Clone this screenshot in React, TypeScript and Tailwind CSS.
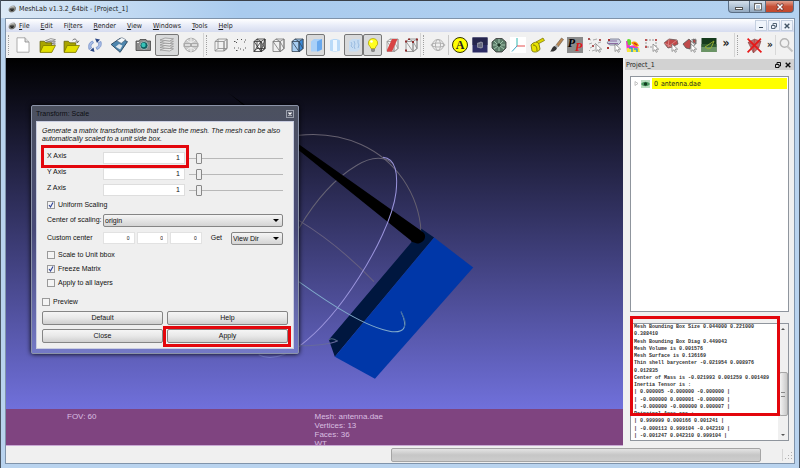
import React, { useState } from "react";

type Kids = { children?: React.ReactNode };

function Svg({ children, size = 16 }: Kids & { size?: number }) {
  return (
    <svg viewBox="0 0 16 16" width={size} height={size} fill="none" strokeLinejoin="round" aria-hidden="true">
      {children}
    </svg>
  );
}

function Tool({ label, pressed, wide, children }: Kids & { label: string; pressed?: boolean; wide?: boolean }) {
  return (
    <button
      type="button"
      aria-label={label}
      className={
        "flex shrink-0 items-center justify-center " +
        (wide ? "w-6 " : "w-[19px] ") +
        (pressed ? "h-[22px] rounded-xs border border-[#777] bg-[#d9dadb]" : "h-6")
      }
    >
      {children}
    </button>
  );
}

function Grip() {
  return (
    <div className="flex h-6 w-2 shrink-0 items-center justify-between border-l border-[#d4d4d4] pr-1 pl-[2px]">
      <span className="h-5 border-l border-dotted border-[#a0a0a0]" />
    </div>
  );
}

const Cube = ({ stroke = "#888", front = "none", side = "none", cross = true }) => (
  <g stroke={stroke} strokeWidth="0.8">
    <path d="M2 4.500 5 2h9v9.500L11 14H2z" fill={front} />
    <path d="M11 4.500 14 2v9.500L11 14z" fill={side} />
    <path d="M2 4.500h9V14M5 2v9.500M2 14l3-2.500h9" />
    {cross && <path d="M2 14 6 4.500 11 14 14 2" />}
  </g>
);

const TallCube = ({ stroke = "#777", front = "none", side = "none" }) => (
  <g stroke={stroke} strokeWidth="0.8">
    <path d="M3 4.500 6 2h8v9.500L11 14.500H3z" fill={front} />
    <path d="M10 4.500 14 2v9.500l-4 3z" fill={side} />
    <path d="M3 4.500h7v10M3 4.500l7 10M10 4.500l4 7M6 2l4 2.500" />
  </g>
);

const Cursor = () => <path d="M9 7v7.500l2-1.800 1.200 2.600 1.200-.6-1.100-2.500h2.400z" fill="#fff" stroke="#777" strokeWidth=".7" />;

const Folder = ({ layers = false }) => (
  <>
    {layers && <path d="m6 3.500 5-2 4.500 1-4 2zM6 5.500l5-2 4.500 1-4 2zM6 7.500l5-2 4.500 1-4 2z" fill="#eee" stroke="#666" strokeWidth=".6" />}
    <path d="M1 14V4h4l1.500 1.500H12V14z" fill="#a8a400" stroke="#5f5c00" strokeWidth=".7" />
    <path d="m1 14.500 3-6.500h11.500L12 14.500z" fill="#e2df00" stroke="#777300" strokeWidth=".7" />
    {!layers && <path d="M9 3c2-2 4-1 4.500 2M15 3.500 13.500 5.500 12 4" stroke="#555" strokeWidth=".8" />}
  </>
);

const Globe = () => (
  <g stroke="#aaa" strokeWidth="0.9">
    <circle cx="8" cy="8" r="5.500" />
    <ellipse cx="8" cy="8" rx="2.500" ry="5.500" />
    <ellipse cx="8" cy="8" rx="7" ry="2" />
  </g>
);

const Eye = () => (
  <>
    <path d="M2 10C2 5 6 2 11 2c3 0 4 2 4 5 0 5-4 7-8 7-3 0-5-1-5-4z" fill="#8a8a80" stroke="#444" />
    <circle cx="8" cy="9" r="3.500" fill="#222" />
    <path d="M3 6c3-3 7-3 10-2M7 7.500h2" stroke="#f4f4f4" strokeWidth="1.500" />
  </>
);

function MainToolbar() {
  return (
    <div role="toolbar" aria-label="Main" className="flex h-[26px] shrink-0 items-center bg-[#f1f1f1]">
      <div className="flex h-6 w-[5px] shrink-0 items-center pl-[2px]">
        <span className="h-5 border-l border-dotted border-[#a0a0a0]" />
      </div>
      <Tool wide label="New project">
        <Svg>
          <path d="M2 .8h8L14 5v10.200H2z" fill="#fff" stroke="#999" strokeWidth=".8" />
          <path d="M10 .8V5h4" fill="#ddd" stroke="#888" strokeWidth=".8" />
        </Svg>
      </Tool>
      <Tool wide label="Open project"><Svg size={17}><Folder layers /></Svg></Tool>
      <Tool wide label="Import mesh"><Svg size={17}><Folder /></Svg></Tool>
      <Tool wide label="Reload">
        <Svg>
          <path d="M2 12.500C1 8 2 5.500 5.500 4l1 2C4 7 3.500 9 4.500 11z" fill="#a9bde6" stroke="#5f7fbf" strokeWidth=".6" />
          <path d="M14 4.500c1 4-.5 6.500-4 8l-1-2c2.500-1 3-2.500 2.500-5z" fill="#a9bde6" stroke="#5f7fbf" strokeWidth=".6" />
          <path d="m8 1.500 5 1-3 3.500zM7.500 15 3 13.500l3.500-3z" fill="#2a4684" />
        </Svg>
      </Tool>
      <Tool wide label="Export mesh">
        <Svg size={18}>
          <path d="M1 7.500 9 2l6.500 3L9 14.500z" fill="#4e86ae" stroke="#25435c" strokeWidth=".8" />
          <path d="m6 4.200 4.500-2.800 3.500 1.800L10 6.500z" fill="#f3f7fa" stroke="#567" strokeWidth=".5" />
          <path d="m5 9.500 3-2.500 3 1.500L9 12z" fill="#dfe8ee" />
        </Svg>
      </Tool>
      <Tool wide label="Snapshot">
        <Svg>
          <path d="M1 4h3l1-1.500h6L12 4h3.500v9.500H1z" fill="#8b8b8b" stroke="#444" strokeWidth=".8" />
          <circle cx="9" cy="8.500" r="4" fill="#0f5f60" stroke="#ccc" strokeWidth=".7" />
          <circle cx="8.500" cy="8" r="2.200" fill="#36c3b8" />
          <path d="M2 5.500h2" stroke="#eee" />
        </Svg>
      </Tool>
      <Tool wide pressed label="Show layers">
        <Svg>
          {[11.5, 9, 6.5, 4, 1.5].map((y) => (
            <path key={y} d={`M1 ${y + 1.5} 6 ${y - 0.5}l8.500 .8-4 2.200z`} fill="#e6e6e6" stroke="#8c8c8c" strokeWidth=".7" />
          ))}
        </Svg>
      </Tool>
      <Tool wide label="Raster mode">
        <Svg>
          <circle cx="8" cy="8" r="6.800" fill="#ccc" stroke="#aaa" />
          <path d="M8 1v14M1.500 8h13M4 3c3 3 5 3 8 0M4 13c3-3 5-3 8 0" stroke="#f2f2f2" />
          <path d="M.5 6h15v4H.5z" fill="#aaa" />
          <path d="M2 8h5M9 8h5" stroke="#eee" strokeWidth="1.500" />
        </Svg>
      </Tool>
      <Grip />
      <Tool label="Bounding box"><Svg><Cube cross={false} /></Svg></Tool>
      <Tool label="Points">
        <Svg><path d="M2 4.500h1.500M5 2.500h1M9 2.500h1M13 3h1M4 5.500h1M12 5h1M2 11h1M4 13.500h1.500M8 12h1M11 13h1M13 11h1M6 11h.8" stroke="#555" strokeWidth="1.200" /></Svg>
      </Tool>
      <Tool label="Wireframe"><Svg><TallCube stroke="#333" /><path d="M3 14.500 10 4.500M6 2v9.500L3 14.500M6 11.500h8M10 14.500 14 2" stroke="#333" strokeWidth=".8" /></Svg></Tool>
      <Tool label="Hidden lines"><Svg><TallCube /></Svg></Tool>
      <Tool label="Flat lines"><Svg><TallCube stroke="#345" front="#a7cdf2" side="#3b8ad8" /></Svg></Tool>
      <Tool pressed label="Flat">
        <Svg><path d="M3 4.500 6 2h8v10l-3 2.500H3z" fill="#a9d0f8" /><path d="m9 4.500 5-2.500v10.500l-5 2z" fill="#69a9ee" /></Svg>
      </Tool>
      <Tool label="Smooth">
        <Svg><path d="M3 3.500c2-2 8-2 10 0v10c-2 1.500-8 1.500-10 0z" fill="#b9daf8" /><path d="M6 3h4v11H6z" fill="#eef7ff" /></Svg>
      </Tool>
      <Tool pressed label="Texture">
        <Svg>
          <path d="M3 4.500 6 2h8v10l-3 2.500H3z" fill="#c6dcf2" />
          <path d="m5 5 1 2-1 2 2 2M8 4l1 3-1 2 1 3M12 3v3l1 2-1 3" stroke="#8fb4dc" strokeWidth=".8" />
        </Svg>
      </Tool>
      <Tool pressed label="Light">
        <Svg>
          <path d="M8 1.500a4.500 4.500 0 0 1 3 8L10 11.500H6L5 9.500a4.500 4.500 0 0 1 3-8z" fill="#ffff20" stroke="#a79a00" strokeWidth=".7" />
          <path d="M6 12h4v2l-1 1H7l-1-1z" fill="#8a8a8a" />
          <circle cx="6.500" cy="4.500" r="1.300" fill="#fff" />
        </Svg>
      </Tool>
      <Tool label="Backface culling"><Svg><TallCube stroke="#999" /><path d="m3 13 5-11h5.500L8 14.500H3z" fill="#d84545" /></Svg></Tool>
      <Tool label="Selected vertices">
        <Svg><TallCube stroke="#888" /><path d="M2 3.500h2v2H2zM13 1.500h2v2h-2zM2 12.500h2v2H2zM5 1.500h2V3H5zM9 4h2v2H9z" fill="#8e2f2f" /></Svg>
      </Tool>
      <Grip />
      <Tool label="Trackball"><Svg><Globe /></Svg></Tool>
      <span className="mx-px h-5 w-px shrink-0 bg-[#c8c8c8]" />
      <button type="button" aria-label="Ambient occlusion" className="flex h-6 w-5 shrink-0 items-center justify-center">
        <span className="flex h-4 w-4 items-center justify-center rounded-full border border-[#333300] bg-[#ffff00] font-['Liberation_Serif',serif] text-xs leading-3 font-bold text-[#222]">A</span>
      </button>
      <Tool label="Depth complexity">
        <Svg><path d="M.5.500h15v15H.5z" fill="#2d2d66" /><path d="M.5.500h15V8H.5z" fill="#25254d" /><path d="m5 6 4-1.500 2 1v5l-2 1-4-1z" fill="#8a8c9e" /><path d="M7 7v3M9 6v4" stroke="#454860" /></Svg>
      </Tool>
      <Tool label="Topology">
        <Svg>
          <path d="M5 1.500h6L15 5v6l-4 4H5L1 11V5z" fill="#5a7a68" stroke="#333" strokeWidth=".8" />
          <path d="m3 4 3 3M12 4 9 7M3 12l4-3M13 12l-4-3M8 2v4M8 10v4M2 8h4M10 8h4" stroke="#a2c5ad" />
          <circle cx="8" cy="8" r="1.500" fill="#1c3324" />
        </Svg>
      </Tool>
      <Tool label="Show axis">
        <Svg>
          <path d="M0 0h16v16H0z" fill="#fff" />
          <path d="M7 9V1" stroke="#30b8b0" />
          <path d="M7 9h8" stroke="#e65050" />
          <path d="m7 9-5 5.500" stroke="#3aa4c4" />
        </Svg>
      </Tool>
      <Tool label="Measure">
        <Svg>
          <path d="m7 5 7-4 1.500 2.500L9 7z" fill="#dcd500" stroke="#777000" strokeWidth=".7" />
          <path d="M2 8c2-3 7-4 8-1l1 5c-1 3-6 4-8 2z" fill="#e8e200" stroke="#6d6900" strokeWidth=".8" />
          <path d="M4 8c3 0 4 2 4 6" stroke="#777000" />
        </Svg>
      </Tool>
      <Tool label="Paint">
        <Svg>
          <path d="m8 8 5.500-7 2 1.500L10 10z" fill="#b98854" stroke="#654" strokeWidth=".6" />
          <path d="m6.500 9 2-1.500L10.500 9.500 9 11z" fill="#aaa" />
          <path d="M2 14.500c2-1 1.500-4.500 4.500-5.500L9 11c-1 3-4 4-7 3.500z" fill="#333" />
        </Svg>
      </Tool>
      <button type="button" aria-label="Pick points" className="flex h-6 w-5 shrink-0 items-center justify-center">
        <span className="flex h-4 w-4 justify-center bg-[#8b8b8b] font-['Liberation_Serif',serif] text-xs leading-3 font-bold italic">
          <span className="text-black">P</span>
          <span className="pt-1 text-[#e01818]">P</span>
        </span>
      </button>
      <Tool label="Select vertices">
        <Svg><path d="m1 2 3 1M6 3l4-1M12 4l2-2M2 7l3-1M7 8l2-2M3 11l2-1M5 14l3-1M11 6l3-1M2 13l1 1" stroke="#999" strokeWidth=".8" /><path d="M1 1h2v2H1zM5 8h2v2H5zM12 2h2v2h-2z" fill="#a55" /><Cursor /></Svg>
      </Tool>
      <Tool label="Select connected">
        <Svg><path d="m1 6 3-4h9l2 3-3 3H4z" fill="#cfd4e4" stroke="#6e7288" strokeWidth=".8" /><path d="M3 4h8M2 6.500h10" stroke="#8a6aa0" /><path d="M2 2h2v2H2zM1 10h2v2H1z" fill="#a33" /><Cursor /></Svg>
      </Tool>
      <Tool label="Select by colour">
        <Svg>
          <path d="M1 4h3l1 5 5-1 4 3v4H2z" fill="#ef38c8" />
          <path d="M2 3c1-2 4-1 4 1v4H3z" fill="#62d830" />
          <path d="M6 6c3-3 7-1 8 3l-3 1z" fill="#f4a000" />
          <path d="M2 11h12l1 4H2z" fill="#f5e73c" />
          <path d="M4 11h3v4M9 12h3v3" stroke="#2c9ad6" strokeWidth="1.500" />
          <path d="m9 6 3 2" stroke="#d62020" strokeWidth="1.500" />
        </Svg>
      </Tool>
      <Tool label="Select area">
        <Svg><path d="M2 3h10v7H2z" stroke="#999" strokeDasharray="2 1" /><path d="M1 2h2v2H1zM11 2h2v2h-2zM1 9h2v2H1z" fill="#b55" /><Cursor /></Svg>
      </Tool>
      <Tool label="Select faces"><Svg><path d="m1 6 5-4 8 1 1 4-6 3-4 1z" fill="#c04a4a" stroke="#655" strokeWidth=".8" /><path d="m6 2-1 8M14 3 5 10M1 6l8 4" stroke="#e29a9a" strokeWidth=".7" /><Cursor /></Svg></Tool>
      <Tool label="Select connected faces"><Svg><path d="m1 7 6-5 2 2-1 8-4-1zM11 2l3 1v4l-3-2z" fill="#c04a4a" stroke="#555" strokeWidth=".8" /><path d="m9 3 5-1-1 6-5 3M7 2l6 6" stroke="#777" strokeWidth=".7" /><Cursor /></Svg></Tool>
      <Tool label="Georeference">
        <Svg>
          <path d="M.5 1h15v14H.5z" fill="#163b1c" />
          <path d="M.5 10h15v5H.5z" fill="#6a9465" />
          <path d="M.5 7h15v3H.5z" fill="#315d32" />
          <path d="m4 10 9-6-3 7-3 1z" stroke="#94ac32" />
        </Svg>
      </Tool>
      <span className="flex-1" />
      <button type="button" aria-label="More tools" className="h-6 w-4 shrink-0 pb-1 text-xs leading-5 font-bold text-[#222]">»</button>
      <Grip />
      <Tool wide label="Delete selected">
        <Svg size={17}>
          <path d="m2 5 6-3 6 2-2 6-5 5z" fill="#c76a6a" stroke="#7a4444" strokeWidth=".6" />
          <path d="m2 5 10 5M8 2 7 15M14 4 5 9" stroke="#944" strokeWidth=".6" />
          <path d="m1.500 1.500 13 13M14 1.500 1.500 14.500" stroke="#e81818" strokeWidth="1.600" />
        </Svg>
      </Tool>
      <button type="button" aria-label="More delete tools" className="h-6 w-2 shrink-0 text-[10px] leading-5 font-bold text-[#222]">»</button>
      <span className="ml-px h-5 w-px shrink-0 bg-[#d8d8d8]" />
      <Tool label="Search"><Svg><circle cx="6.500" cy="6" r="4.200" stroke="#b4b4b4" strokeWidth="1.400" /><path d="m9.500 9.500 5 5" stroke="#c4c4c4" strokeWidth="2" /></Svg></Tool>
    </div>
  );
}

const winBtn = "flex h-3 items-center justify-center border border-t-0 border-[#5b6f86]";

function TitleBar() {
  return (
    <header className="flex h-[18px] shrink-0 items-start border-t border-[#3a4048] bg-linear-to-r from-[#dce9f6] via-[#a9cbee] via-30% to-[#b4d2f0] pr-[5px] pl-[7px]">
      <div className="flex h-4 flex-1 items-center gap-[3px]">
        <Svg size={8}><Eye /></Svg>
        <h1 className="text-[7px] leading-3 text-[#1c1c1c]">MeshLab v1.3.2_64bit - [Project_1]</h1>
      </div>
      <button type="button" aria-label="Minimize" className={winBtn + " w-[22px] rounded-bl bg-linear-to-b from-[#d4e0ec] to-[#93a9c0]"}>
        <span className="mt-1 h-[3px] w-2 border border-[#555] bg-white" />
      </button>
      <button type="button" aria-label="Maximize" className={winBtn + " w-4 border-l-0 bg-linear-to-b from-[#d4e0ec] to-[#93a9c0]"}>
        <svg viewBox="0 0 8 8" width="8" height="8" fill="none"><path d="M1 1h6v5.500H1z" stroke="#666" strokeWidth="2" /><path d="M1.500 1.500h5v4.500h-5z" stroke="#fff" /></svg>
      </button>
      <button type="button" aria-label="Close" className={winBtn + " w-7 rounded-br border-l-0 bg-linear-to-b from-[#e0a18f] via-[#c65037] to-[#c2492e]"}>
        <svg viewBox="0 0 8 8" width="8" height="8"><path d="m1 1 6 6M7 1 1 7" stroke="#633" strokeWidth="2.600" /><path d="m1.500 1.500 5 5M6.500 1.500l-5 5" stroke="#fff" strokeWidth="1.500" /></svg>
      </button>
    </header>
  );
}

function MenuBar() {
  const mdi = "flex h-[11px] w-3 items-center justify-center border border-[#c5d0e0] bg-[#eff4fb]";
  return (
    <nav className="flex h-[14px] shrink-0 items-center border-t border-[#7f93aa] bg-linear-to-b from-white via-[#e8ecf8] to-[#d6dcef] pr-px pl-[2px]">
      <Svg size={8}><Eye /></Svg>
      <div className="ml-[3px] flex flex-1 gap-[11px]">
        {["File", "Edit", "Filters", "Render", "View", "Windows", "Tools", "Help"].map((m) => {
          const at = m === "Filters" ? 2 : 0;
          return (
            <button key={m} type="button" className="text-[7px] leading-3 text-[#1c1c1c]">
              {m.slice(0, at)}<span className="underline">{m[at]}</span>{m.slice(at + 1)}
            </button>
          );
        })}
      </div>
      <div className="flex gap-px">
        <button type="button" aria-label="Minimize project" className={mdi}><span className="mt-1 h-px w-1 bg-[#345]" /></button>
        <button type="button" aria-label="Restore project" className={mdi}><Restore color="#567" /></button>
        <button type="button" aria-label="Close project" className={mdi}><Cross color="#456" /></button>
      </div>
    </nav>
  );
}

const Restore = ({ color }: { color: string }) => (
  <svg viewBox="0 0 6 6" width="6" height="6" fill="none" stroke={color}><path d="M2 2V.5h3.500V4H4M.5 2.500H4v3H.5z" /></svg>
);
const Cross = ({ color }: { color: string }) => (
  <svg viewBox="0 0 6 6" width="6" height="6" stroke={color} strokeWidth="1.400"><path d="m.7.700 4.600 4.600M5.300.700.7 5.300" /></svg>
);

function Scene() {
  return (
    <svg viewBox="6 58 618 387" preserveAspectRatio="xMinYMin slice" className="absolute inset-0 h-full w-full" fill="none" role="img" aria-label="antenna.dae mesh">
      <path d="M298 135C345 130 382 150 402 179c13 19 17 36 18 52" stroke="#65606f" />
      <path d="M298 228c16-27 36-50 58-63 14-9 30-10 37 0" stroke="#666374" />
      <path d="M298 220c28 17 50 35 75 61" stroke="#666080" />
      <path d="m228 93 70 51 126 89 0 5-6 5-7-2L298 150z" fill="#000" />
      <path d="m420 228 13 9-99 119-6-17 83-98 10-1z" fill="#00173f" />
      <path d="m433 237 39 30-98 111-40-22z" fill="#0037a8" />
      <path d="M413 235c4-7 11-4 11 1 0 4-4 7-8 7l-6-2z" fill="#000" />
      <path d="M382 157c13 1 15 17 13 35-3 25-21 60-37 85-19 30-37 52-60 69" stroke="#9a94dc" />
      <path d="M298 346c-14 9-29 14-40 8" stroke="#7d83d8" />
      <path d="M298 281c31 22 67 46 93 50 13 1 16-5 9-20" stroke="#80aacb" />
      <path d="M403 326c3-3 0-9-3-15" stroke="#426b9c" />
      <path d="M298 345c15 0 30-1 39-5" stroke="#666a9d" />
      <path d="M328 339c3-2 5-1 8 1" stroke="#506a80" />
    </svg>
  );
}

const inputCls = "h-3 min-w-0 border border-[#dedede] bg-white pr-1 text-right text-[7px] leading-3 outline-none";
const btnCls = "h-[14px] rounded-xs border border-[#858585] bg-linear-to-b from-[#f5f5f5] via-[#e8e8e8] to-[#cfcfcf] text-[7px] leading-3";
const red = "pointer-events-none absolute border-3 border-[#e3060c]";

function AxisRow({ axis }: { axis: string }) {
  const id = "axis-" + axis;
  return (
    <div className="flex h-4 items-center">
      <label htmlFor={id} className="w-14 pb-1">{axis} Axis</label>
      <input id={id} defaultValue="1" className={inputCls + " w-[82px]"} />
      <input
        type="range"
        aria-label={axis + " Axis slider"}
        defaultValue="8"
        className="ml-1 h-3 min-w-0 flex-1 appearance-none bg-transparent [&::-webkit-slider-runnable-track]:h-px [&::-webkit-slider-runnable-track]:bg-[#b8b8b8] [&::-webkit-slider-thumb]:-mt-[5px] [&::-webkit-slider-thumb]:h-[11px] [&::-webkit-slider-thumb]:w-[6px] [&::-webkit-slider-thumb]:appearance-none [&::-webkit-slider-thumb]:rounded-[1px] [&::-webkit-slider-thumb]:border [&::-webkit-slider-thumb]:border-[#888] [&::-webkit-slider-thumb]:bg-[#eeeeee]"
      />
    </div>
  );
}

function Check({ label, on }: { label: string; on?: boolean }) {
  const [v, setV] = useState(!!on);
  return (
    <label className="flex h-[14px] items-center gap-[3px]">
      <span className="relative flex h-2 w-2">
        <input type="checkbox" checked={v} onChange={() => setV(!v)} className="h-2 w-2 appearance-none border border-[#9a9a9a] bg-[#f4f4f4]" />
        {v && <svg viewBox="0 0 8 8" width="8" height="8" className="pointer-events-none absolute inset-0" fill="none"><path d="m2 4 1.500 2L6 1.500" stroke="#34489a" strokeWidth="1.200" /></svg>}
      </span>
      {label}
    </label>
  );
}

function Drop({ id, label, value, className }: { id: string; label?: string; value: string; className: string }) {
  return (
    <span className={"relative flex " + className}>
      <select id={id} aria-label={label} className="h-[13px] w-full appearance-none rounded-xs border border-[#858585] bg-linear-to-b from-[#f5f5f5] to-[#d4d4d4] pl-px text-[7px] leading-3 outline-none">
        <option>{value}</option>
      </select>
      <span className="pointer-events-none absolute top-[5px] right-1 border-x-3 border-t-3 border-x-transparent border-t-black" />
    </span>
  );
}

function ScaleDialog() {
  return (
    <section role="dialog" aria-label="Transform: Scale" className="absolute top-[47px] left-[25px] w-[268px] rounded-xs border border-[#8b93a8] bg-linear-to-b from-[#4c515f] via-[#484a78] to-[#7479c6] px-1 pb-1 font-['Liberation_Sans',Arial,sans-serif] text-[7px] leading-2 text-[#111] shadow-[0_0_5px_#000]">
      <header className="flex h-[15px] items-center justify-between">
        <h2 className="text-[#0c0e12]">Transform: Scale</h2>
        <button type="button" aria-label="Close dialog" className="flex h-2 w-2 items-center justify-center border border-[#9ba0ad] bg-[#4e5363]"><svg viewBox="0 0 4 4" width="4" height="4"><path d="m.5.500 3 3M3.500.500l-3 3" stroke="#fff" strokeWidth="1.300" /></svg></button>
      </header>
      <div className="border border-[#c9cde0] bg-[#efefef] px-[5px] pt-[5px] pb-[5px]">
        <p className="whitespace-nowrap italic">Generate a matrix transformation that scale the mesh. The mesh can be also<br />automatically scaled to a unit side box.</p>
        <div className="relative mt-[7px] px-[5px]">
          <AxisRow axis="X" />
          <AxisRow axis="Y" />
          <AxisRow axis="Z" />
          <span className={red + " -top-[5px] -left-px h-[23px] w-[148px]"} />
          <Check label="Uniform Scaling" on />
          <div className="flex h-4 items-center">
            <label htmlFor="center" className="w-14 shrink-0 whitespace-nowrap">Center of scaling:</label>
            <Drop id="center" value="origin" className="flex-1" />
          </div>
          <div className="flex h-5 items-center">
            <span className="w-14 shrink-0 whitespace-nowrap">Custom center</span>
            <div className="flex min-w-0 flex-1 gap-[2px]">
              {["x", "y", "z"].map((a) => (
                <input key={a} aria-label={"Custom center " + a} defaultValue="0" className="h-3 w-0 min-w-0 flex-1 border border-[#e2e2e2] bg-white pr-1 text-right text-[5px] leading-3 outline-none" />
              ))}
            </div>
            <label htmlFor="get" className="mx-[9px]">Get</label>
            <Drop id="get" value="View Dir" className="w-[52px] shrink-0" />
          </div>
          <Check label="Scale to Unit bbox" />
          <Check label="Freeze Matrix" on />
          <Check label="Apply to all layers" />
        </div>
        <div className="mt-[5px]"><Check label="Preview" /></div>
        <div className="relative mt-[2px] grid grid-cols-2 gap-x-1 gap-y-1">
          <button type="button" className={btnCls}>Default</button>
          <button type="button" className={btnCls}>Help</button>
          <button type="button" className={btnCls}>Close</button>
          <button type="button" className={btnCls}>Apply</button>
          <span className={red + " -right-[3px] -bottom-1 h-[21px] w-[128px]"} />
        </div>
      </div>
    </section>
  );
}

function Viewport() {
  return (
    <main className="relative flex min-w-0 flex-1 flex-col overflow-hidden bg-linear-to-b/srgb from-black to-[#7c7cf2]">
      <Scene />
      <ScaleDialog />
      <div className="relative mt-auto flex h-[37px] overflow-hidden border-b border-[#c9a9d4] bg-[#7f4480] pt-[3px] font-['Liberation_Sans',Arial,sans-serif] text-[8px] leading-[9px] text-[#d9bfe0]">
        <p className="w-1/2 pl-[61px]">FOV: 60</p>
        <div className="whitespace-nowrap"><p>Mesh: antenna.dae</p><p>Vertices: 13</p><p>Faces: 36</p><p>WT</p></div>
      </div>
    </main>
  );
}

const log = [
  "Mesh Bounding Box Size 0.044000 0.221000", "0.388410", "Mesh Bounding Box Diag 0.449043", "Mesh Volume is 0.001576",
  "Mesh Surface is 0.136169", "Thin shell barycenter -0.021954 0.008976", "0.012835", "Center of Mass is -0.021993 0.001259 0.001489",
  "Inertia Tensor is :", "| 0.000005 -0.000000 -0.000000 |", "| -0.000000 0.000001 -0.000000 |", "| -0.000000 -0.000000 0.000007 |",
  "Principal Axes are :", "| 0.999999 0.000166 0.001241 |", "| -0.000113 0.999104 -0.042310 |", "| -0.001247 0.042310 0.999104 |",
];

function SidePanel() {
  return (
    <aside className="flex w-[171px] shrink-0 flex-col pl-[2px]">
      <header className="mt-px flex h-[11px] shrink-0 items-center gap-1 bg-[#d2d2d2] pr-[3px] pl-px text-[7px] leading-2">
        <h2 className="flex-1">Project_1</h2>
        <button type="button" aria-label="Float panel"><Restore color="#111" /></button>
        <button type="button" aria-label="Close panel"><Cross color="#111" /></button>
      </header>
      <ul className="mx-[5px] mt-[6px] flex-1 border border-[#8f959d] bg-white p-px">
        <li className="flex h-[11px] items-center text-[7px] leading-2">
          <svg viewBox="0 0 5 5" width="5" height="5" className="mx-[2px]" fill="none"><path d="m1 .5 3 2-3 2z" stroke="#aaa" strokeWidth=".7" /></svg>
          <svg viewBox="0 0 9 8" width="9" height="8" className="mr-[2px]"><path d="M0 0h9v8H0z" fill="#b8ddc0" /><path d="M0 4c2-3 7-3 9 0-2 3-7 3-9 0z" fill="#4c9a63" /><circle cx="4.500" cy="4" r="1.700" fill="#123d20" /></svg>
          <span className="flex h-[11px] flex-1 items-center gap-[3px] bg-[#ffff00] pl-[2px]"><span>0</span><span>antenna.dae</span></span>
        </li>
      </ul>
      <div className="relative mx-[5px] mt-[11px] mb-[5px] flex h-[118px] shrink-0 border border-[#8f959d] bg-white">
        <div className="flex min-w-0 flex-1 flex-col justify-between overflow-hidden pl-[3px] font-['Liberation_Mono',monospace] text-[5px] leading-[7px] font-bold whitespace-pre text-[#333]">
          {log.map((l) => <p key={l}>{l}</p>)}
        </div>
        <div className="flex w-[10px] flex-col items-center justify-between bg-[#f0f0f0] py-1">
          <span className="border-x-2 border-b-2 border-x-transparent border-b-[#555]" />
          <span className="mt-6 flex h-11 w-[9px] items-center justify-center rounded-xs border border-[#a6a6a6] bg-linear-to-r from-[#f3f3f3] to-[#c9c9c9]"><span className="h-[5px] w-1 border-y border-[#888]" /></span>
          <span className="border-x-2 border-t-2 border-x-transparent border-t-[#555]" />
        </div>
        <span className={red + " -top-2 -left-px h-[100px] w-[150px]"} />
      </div>
    </aside>
  );
}

export default function App() {
  return (
    <div className="flex h-screen w-full flex-col overflow-hidden border-r border-l border-[#4a5563] bg-[#b9d3ee] font-['DejaVu_Sans_Condensed','DejaVu_Sans',sans-serif] text-[#1c1c1c]">
      <TitleBar />
      <div className="mx-1 mb-1 flex min-h-0 flex-1 flex-col border-r border-b border-l border-[#7f93aa] bg-[#f0f0f0]">
        <MenuBar />
        <MainToolbar />
        <div className="flex min-h-0 flex-1">
          <Viewport />
          <SidePanel />
        </div>
        <footer className="flex h-[17px] shrink-0 items-center justify-end pr-px">
          <div role="progressbar" aria-label="Progress" className="h-[14px] w-[47%] rounded-xs border border-[#a5a5a5] bg-linear-to-b from-[#e4e4e4] via-[#c6c6c6] to-[#cdcdcd]" />
          <span className="ml-[21px] h-3 w-px bg-[#d5d5d5]" />
          <svg viewBox="0 0 10 10" width="10" height="14"><path d="M8 2h1v1H8zM5 5h1v1H5zM8 5h1v1H8zM2 8h1v1H2zM5 8h1v1H5zM8 8h1v1H8z" fill="#b0b0b0" /></svg>
        </footer>
      </div>
    </div>
  );
}
